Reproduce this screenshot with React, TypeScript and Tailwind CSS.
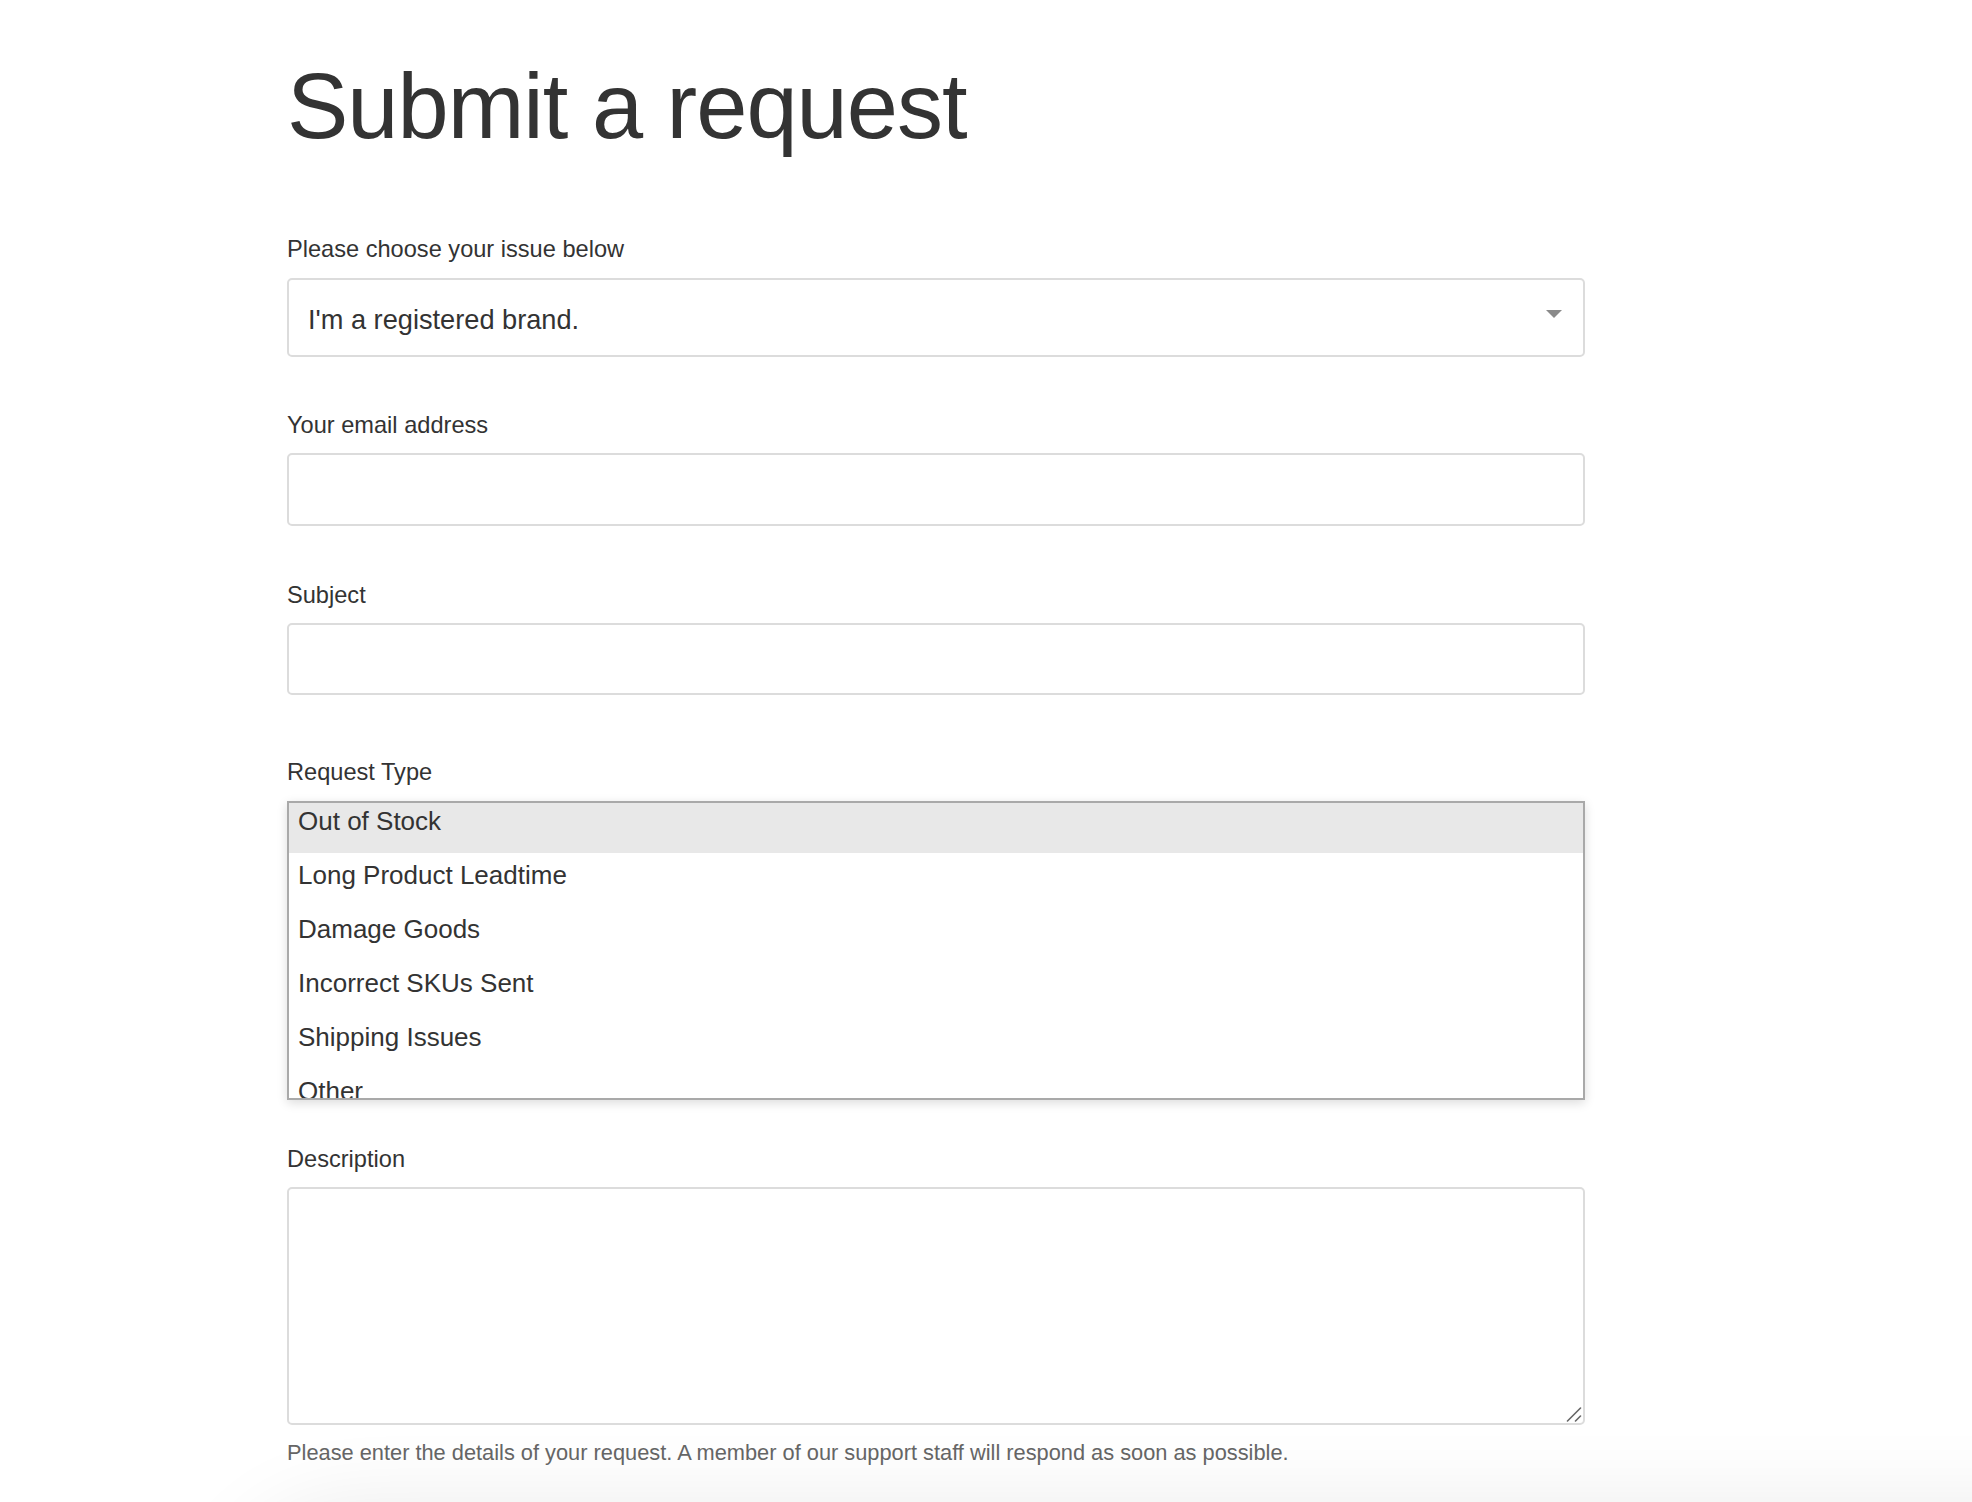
import React from 'react';

const requestTypes = [
  'Out of Stock',
  'Long Product Leadtime',
  'Damage Goods',
  'Incorrect SKUs Sent',
  'Shipping Issues',
  'Other',
];

const Label: React.FC<{ children: React.ReactNode }> = ({ children }) => (
  <label className="block text-[23.6px] leading-[28px] text-[#333]">{children}</label>
);

const App: React.FC = () => {
  return (
    <div
      className="relative min-h-screen overflow-hidden bg-white text-[#333]"
      style={{ fontFamily: '"Liberation Sans", Arial, Helvetica, sans-serif' }}
    >
      <main className="pl-[287px] pt-[60px]">
        <div className="w-[1298px]">
          <h1 className="text-[92px] leading-[92px] tracking-[-1px] font-normal text-[#333]">
            Submit a request
          </h1>

          {/* issue picker */}
          <div className="mt-[83px]">
            <Label>Please choose your issue below</Label>
            <div className="mt-[15px] flex h-[79px] items-center justify-between rounded-[5px] border-2 border-[#dcdcdc] pl-[19px] pr-[21px]">
              <span className="mt-[5px] text-[27.2px] text-[#333]">I'm a registered brand.</span>
              <svg width="16" height="8" viewBox="0 0 16 8" className="mb-[8px]">
                <path d="M0 0 L16 0 L8 8 Z" fill="#8a8a8a" />
              </svg>
            </div>
          </div>

          <div className="mt-[54px]">
            <Label>Your email address</Label>
            <input
              type="email"
              className="mt-[14px] block h-[73px] w-full rounded-[5px] border-2 border-[#dcdcdc] px-[19px] text-[27px] outline-none"
            />
          </div>

          <div className="mt-[55px]">
            <Label>Subject</Label>
            <input
              type="text"
              className="mt-[14px] block h-[72px] w-full rounded-[5px] border-2 border-[#dcdcdc] px-[19px] text-[27px] outline-none"
            />
          </div>

          {/* request type listbox */}
          <div className="mt-[63px]">
            <Label>Request Type</Label>
            <div className="mt-[15px] h-[299px] overflow-hidden border-2 border-[#a9a9a9] bg-white shadow-[0_3px_10px_rgba(0,0,0,0.14)]">
              <ul className="-mt-[4px]">
                {requestTypes.map((t, i) => (
                  <li
                    key={t}
                    className={`h-[54px] pl-[9px] pt-[7px] text-[26px] leading-[30px] text-[#333] ${
                      i === 0 ? 'bg-[#e8e8e8]' : ''
                    }`}
                  >
                    {t}
                  </li>
                ))}
              </ul>
            </div>
          </div>

          <div className="mt-[45px]">
            <Label>Description</Label>
            <div className="relative mt-[14px]">
              <textarea className="block h-[238px] w-full resize-none rounded-[5px] border-2 border-[#dcdcdc] p-[12px] text-[23px] outline-none" />
              <svg
                width="16"
                height="16"
                viewBox="0 0 16 16"
                className="pointer-events-none absolute bottom-[3px] right-[3px]"
              >
                <path d="M1.5 15 L14.5 2 M9.5 15 L14.5 10" stroke="#666" strokeWidth="1.6" strokeLinecap="round" />
              </svg>
            </div>
            <p className="mt-[15px] text-[21.8px] leading-[26px] text-[#666]">
              Please enter the details of your request. A member of our support staff will respond as soon as possible.
            </p>
          </div>
        </div>
      </main>

      {/* shadow of the footer bar just below the fold */}
      <div className="pointer-events-none absolute left-[250px] right-[-200px] top-[1530px] h-[200px] rounded-[200px] bg-white shadow-[0_0_90px_20px_rgba(0,0,0,0.09)]" />
    </div>
  );
};

export default App;
